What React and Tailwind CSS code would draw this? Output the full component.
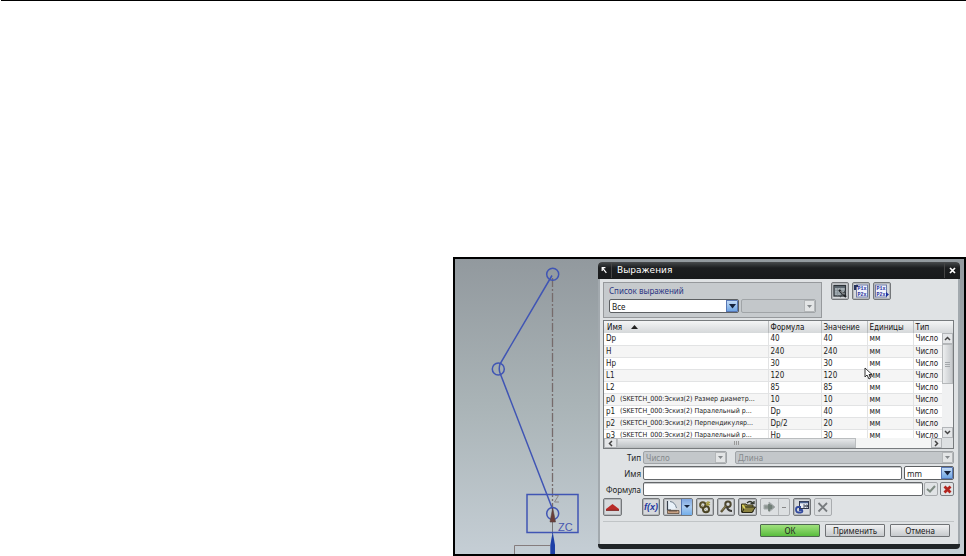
import React from "react";

const rows = [
  ["Dp", "40", "40"],
  ["H", "240", "240"],
  ["Hp", "30", "30"],
  ["L1", "120", "120"],
  ["L2", "85", "85"],
  ["p0", "10", "10", "(SKETCH_000:Эскиз(2) Размер диаметр..."],
  ["p1", "Dp", "40", "(SKETCH_000:Эскиз(2) Паралельный р..."],
  ["p2", "Dp/2", "20", "(SKETCH_000:Эскиз(2) Перпендикуляр..."],
  ["p3", "Hp", "30", "(SKETCH_000:Эскиз(2) Паралельный р..."],
];

function Sketch() {
  return (
    <svg className="h-[295px] w-[143px] shrink-0" viewBox="455 259 143 295" fill="none" aria-label="Эскиз">
      <path d="M552.5 278V508" stroke="#766b6b" strokeWidth="1.3" strokeDasharray="9 2 2 2" />
      <path d="M552.5 508V534" stroke="#777" />
      <g stroke="#4055b4" strokeWidth="1.5">
        <circle cx="552.7" cy="274.3" r="6" />
        <circle cx="498.3" cy="369" r="6" />
        <circle cx="552.7" cy="513.5" r="6" />
        <path d="M552 275.5L500 364Q498.5 369 500 373L552.5 509" />
        <rect x="527" y="494.5" width="51" height="38" />
      </g>
      <path d="M555 495.500H558.500L554.500 502H559" stroke="#8a8586" />
      <path d="M552.7 508L555.5 522H550Z" fill="#6b3d38" stroke="#54423f" strokeWidth=".6" />
      <text x="558" y="531" fill="#4858b0" className="font-['Liberation_Sans',sans-serif] text-[11px]">ZC</text>
      <path d="M552.700 532L555 545V554H550.300V545Z" fill="#1d3fa6" />
      <path d="M514.500 554V545.500H550" stroke="#857c7d" />
    </svg>
  );
}

function Arrow({ dim }) {
  return (
    <span
      className={
        dim
          ? "pointer-events-none flex w-[11px] shrink-0 items-center justify-center border border-[#b4b7b9] bg-[#e3e5e6]"
          : "pointer-events-none flex w-[12px] shrink-0 items-center justify-center border border-[#5877b4] bg-linear-to-b from-[#c3dbf5] to-[#6ea5e4]"
      }
    >
      <svg width="7" height="5" viewBox="0 0 7 5">
        <path d={dim ? "M1 1H6L3.500 4Z" : "M0 0H7L3.500 4.500Z"} fill={dim ? "#85898c" : "#15223c"} />
      </svg>
    </span>
  );
}

function Select({ id, label, value, dim, className }) {
  return (
    <span
      className={
        "flex overflow-hidden rounded-[2px] border " +
        (dim ? "border-[#a0a4a7] bg-[#c3c7ca] text-[#85898c] " : "border-[#5c5f62] bg-white text-[#222] ") +
        className
      }
    >
      <select
        id={id}
        aria-label={label}
        disabled={dim}
        className="min-w-0 flex-1 appearance-none bg-transparent pl-[2px] leading-[11px] opacity-100 outline-none"
      >
        <option>{value}</option>
      </select>
      <Arrow dim={dim} />
    </span>
  );
}

function Tool({ label, dim, children, className = "w-[18px]" }) {
  return (
    <button
      type="button"
      aria-label={label}
      className={
        "flex h-[18px] shrink-0 items-center justify-center rounded-[2px] border " +
        (dim ? "border-[#a9acaf] bg-[#dcdfe1] " : "border-[#74777a] bg-[#d6d9dc] shadow-[inset_0_0_0_1px_#b5b8bb] ") +
        className
      }
    >
      {children}
    </button>
  );
}

function Icon({ children, w = 14 }) {
  return (
    <svg width={w} height="14" viewBox={w === 14 ? "0 0 14 14" : "0 0 16 14"} fill="none" className="shrink-0">
      {children}
    </svg>
  );
}

function ParamsIcon({ out }) {
  return (
    <Icon>
      <rect x={out ? 0.5 : 2.5} y="1" width="11" height="12" fill="#f1f2fa" stroke="#6f7ba6" />
      <text x={out ? 1.5 : 3.5} y="6" fill="#1d2f9c" className="font-['Liberation_Mono',monospace] text-[5px] font-bold">P1x</text>
      <text x={out ? 1.5 : 3.5} y="12" fill="#1d2f9c" className="font-['Liberation_Mono',monospace] text-[5px] font-bold">P2x</text>
      {out ? <path d="M11 8L14 10.500L11 13Z" fill="#1d2f9c" /> : <path d="M0 1H4V3H2V6H0Z" fill="#26325c" />}
    </Icon>
  );
}

function TopTools() {
  return (
    <div className="ml-[9px] flex gap-[3px]">
      <Tool label="Таблица">
        <Icon>
          <rect x="1" y="1.500" width="11.500" height="10.500" fill="#a3adb2" stroke="#2c3237" strokeWidth="1.300" />
          <path d="M2 3H12" stroke="#46505a" strokeWidth="1.500" />
          <path d="M2 6.500H12M2 9H12M4.500 4V12M7.500 4V12" stroke="#7a858d" strokeWidth=".5" />
          <path d="M6 6L13 13" stroke="#1f2326" strokeWidth="2" />
          <path d="M12.500 7L7 13" stroke="#40464a" strokeWidth="1.300" />
          <path d="M7.500 7L11 10.500" stroke="#e5e5e5" strokeWidth=".8" />
        </Icon>
      </Tool>
      <Tool label="Импорт выражений"><ParamsIcon /></Tool>
      <Tool label="Экспорт выражений"><ParamsIcon out /></Tool>
    </div>
  );
}

function ScrollButton({ label, d, className }) {
  return (
    <button type="button" aria-label={label} className={"flex shrink-0 items-center justify-center border border-[#b2b5b8] bg-[#e4e6e8] " + className}>
      <svg width="7" height="7" viewBox="0 0 7 7" fill="none">
        <path d={d} stroke="#444" strokeWidth="1.500" />
      </svg>
    </button>
  );
}

function ExpressionTable() {
  return (
    <div className="mt-[2px] h-[129px] border border-[#777b7e] bg-white font-['DejaVu_Sans_Condensed','DejaVu_Sans',sans-serif]">
      <div className="flex h-[117px]">
        <div className="min-w-0 flex-1 overflow-hidden">
          <table className="w-full table-fixed border-collapse text-left leading-[11px]">
            <colgroup>
              <col />
              <col className="w-[53px]" />
              <col className="w-[46px]" />
              <col className="w-[46px]" />
              <col className="w-[29px]" />
            </colgroup>
            <thead>
              <tr className="h-[12px] bg-linear-to-b from-[#f4f5f6] to-[#d5d8da] text-[#111]">
                <th className="border-r border-[#b9bcbe] p-0 pl-[3px] font-normal">
                  <span className="flex items-center gap-[9px]">
                    Имя
                    <svg width="7" height="4" viewBox="0 0 7 4"><path d="M3.500 0L7 4H0Z" fill="#222" /></svg>
                  </span>
                </th>
                <th className="border-r border-[#b9bcbe] p-0 pl-[2px] font-normal">Формула</th>
                <th className="border-r border-[#b9bcbe] p-0 pl-[2px] font-normal">Значение</th>
                <th className="border-r border-[#b9bcbe] p-0 pl-[2px] font-normal">Единицы</th>
                <th className="p-0 pl-[2px] font-normal">Тип</th>
              </tr>
            </thead>
            <tbody>
              {rows.map(([name, formula, value, note]) => (
                <tr key={name} className="h-[12px] whitespace-nowrap border-b border-[#e2e3e4] text-[#222] even:bg-[#f5f5f5]">
                  <td className="border-r border-[#e2e3e4] p-0 pl-[2px]">
                    <span className="flex">
                      <span className={note ? "w-[14px] shrink-0" : ""}>{name}</span>
                      <span className="text-[7px]">{note}</span>
                    </span>
                  </td>
                  <td className="border-r border-[#e2e3e4] p-0 pl-[2px]">{formula}</td>
                  <td className="border-r border-[#e2e3e4] p-0 pl-[2px]">{value}</td>
                  <td className="border-r border-[#e2e3e4] p-0 pl-[2px]">мм</td>
                  <td className="p-0 pl-[2px]">Число</td>
                </tr>
              ))}
            </tbody>
          </table>
        </div>
        <div className="flex w-[11px] shrink-0 flex-col bg-[#f0f1f2]">
          <div className="h-[12px] bg-linear-to-b from-[#f4f5f6] to-[#d5d8da]" />
          <ScrollButton label="Вверх" className="h-[11px]" d="M1 5L3.500 2.500L6 5" />
          <div className="flex h-[40px] flex-col items-center justify-center gap-px border border-[#b5b8ba] bg-linear-to-r from-[#eceeef] to-[#c6c9cc]">
            <i className="h-px w-[5px] bg-[#a4a8ab]" />
            <i className="h-px w-[5px] bg-[#a4a8ab]" />
            <i className="h-px w-[5px] bg-[#a4a8ab]" />
          </div>
          <div className="flex-1" />
          <ScrollButton label="Вниз" className="h-[11px]" d="M1 2L3.500 4.500L6 2" />
        </div>
      </div>
      <div className="flex h-[10px] bg-[#f4f5f5]">
        <ScrollButton label="Влево" className="w-[13px]" d="M5 1L2.500 3.500L5 6" />
        <div className="flex w-[239px] items-center justify-center gap-px border border-[#babdbf] bg-linear-to-b from-[#e6e8ea] to-[#bfc3c6]">
          <i className="h-[4px] w-px bg-[#999]" />
          <i className="h-[4px] w-px bg-[#999]" />
          <i className="h-[4px] w-px bg-[#999]" />
        </div>
        <div className="flex-1" />
        <ScrollButton label="Вправо" className="w-[11px]" d="M2 1L4.500 3.500L2 6" />
        <div className="w-[11px] bg-[#dde0e2]" />
      </div>
    </div>
  );
}

function Fields() {
  const input = "h-[14px] min-w-0 flex-1 rounded-[2px] border border-[#64676a] bg-white px-[2px] shadow-[inset_0_1px_0_#c5c7c9] outline-none";
  const label = "w-[38px] shrink-0 text-right text-[#222]";
  return (
    <div className="mt-[2px] flex flex-col gap-[2px]">
      <div className="flex h-[13px] items-center">
        <label htmlFor="type" className={label}>Тип</label>
        <Select id="type" value="Число" dim className="ml-[2px] h-[13px] w-[84px]" />
        <Select label="Размерность" value="Длина" dim className="ml-[8px] h-[13px] flex-1" />
      </div>
      <div className="flex h-[14px] items-center">
        <label htmlFor="name" className={label}>Имя</label>
        <span className="w-[2px]" />
        <input id="name" className={input} />
        <Select label="Единицы" value="mm" className="ml-[2px] h-[14px] w-[50px]" />
      </div>
      <div className="flex h-[14px] items-center">
        <label htmlFor="formula" className={label}>Формула</label>
        <span className="w-[2px]" />
        <input id="formula" className={input} />
        <button type="button" aria-label="Принять" className="ml-px flex size-[14px] items-center justify-center rounded-[2px] border border-[#a6a9ac] bg-[#e0e3e5]">
          <svg width="10" height="8" viewBox="0 0 10 8" fill="none"><path d="M1 4L4 6.500L9 1" stroke="#7e8b82" strokeWidth="2" /></svg>
        </button>
        <button type="button" aria-label="Отклонить" className="ml-[2px] flex size-[14px] items-center justify-center rounded-[2px] border border-[#7b7e81] bg-[#e0e3e5]">
          <svg width="9" height="9" viewBox="0 0 9 9" fill="none"><path d="M1.500 1.500L7.500 7.500M7.500 1.500L1.500 7.500" stroke="#b3241d" strokeWidth="2.800" /></svg>
        </button>
      </div>
    </div>
  );
}

function ToolRow() {
  return (
    <div className="mt-[2px] flex">
      <Tool label="Свернуть" className="w-[19px]">
        <svg width="13" height="7" viewBox="0 0 13 7"><path d="M6.500 0L13 5V6.500H0V5Z" fill="#b92b28" /><path d="M0 6.300H13" stroke="#7c2624" /></svg>
      </Tool>
      <div className="ml-[20px] flex gap-[3px]">
        <Tool label="Функции">
          <span className="font-['Liberation_Sans',sans-serif] text-[9px] font-bold italic text-[#2438a0]">f(x)</span>
        </Tool>
        <Tool label="Измерить" className="w-[30px]">
          <Icon w={16}>
            <path d="M2 1H4L9 3L12 7L10 9H2Z" fill="#e9f2fa" />
            <path d="M5 1.500Q10 2 11.500 8" stroke="#6f7e8d" />
            <path d="M2.500 1V10H6" stroke="#38414d" strokeWidth="1.200" />
            <path d="M2.500 10.500H14V13.500H2.500Z" fill="#c8a284" stroke="#4e3e31" strokeWidth=".7" />
            <path d="M5 10V12M7 10V12M9 10V12M11 10V12" stroke="#493b30" strokeWidth=".7" />
          </Icon>
          <span className="flex h-[16px] w-[11px] items-center justify-center border-l border-[#5778b3] bg-linear-to-b from-[#7fa5df] via-[#a9cbf0] to-[#73aeea]">
            <svg width="6" height="4" viewBox="0 0 6 4"><path d="M0 0H6L3 3Z" fill="#15223c" /></svg>
          </span>
        </Tool>
        <Tool label="Связи">
          <Icon>
            <circle cx="4.800" cy="5" r="2.700" stroke="#574f2c" strokeWidth="1.900" />
            <circle cx="8" cy="9.300" r="3" stroke="#4a4425" strokeWidth="2" />
            <path d="M3 4L6 7M6 8L9 11" stroke="#afa36a" strokeWidth=".8" />
            <path d="M10 1V6M8 2.500L12 5M12 2L8 5" stroke="#a59a3c" strokeWidth="1.100" />
          </Icon>
        </Tool>
        <Tool label="Правка связей">
          <Icon>
            <circle cx="9" cy="4.300" r="2.700" stroke="#4d472f" strokeWidth="2" />
            <path d="M7 6L2 12" stroke="#5b5335" strokeWidth="2.400" />
            <path d="M8 7Q9 11 13 11" stroke="#3c3b36" strokeWidth="2.200" />
            <path d="M6.500 6L3 10.500" stroke="#b4a36a" strokeWidth=".6" />
          </Icon>
        </Tool>
        <Tool label="Открыть" className="w-[19px]">
          <Icon w={16}>
            <path d="M1.500 4H6L7 5H13V12H1.500Z" fill="#8e8541" stroke="#38351b" />
            <path d="M2 12.500L5 7H15.500L12 12.500Z" fill="#8b823f" stroke="#292819" />
            <path d="M7 3Q10 0 13 3M10.500 3.500H14V1" stroke="#34382e" strokeWidth="1.300" />
            <path d="M2.500 5L5 8.500" stroke="#e0d75e" strokeWidth="1.500" />
          </Icon>
        </Tool>
        <Tool label="Переместить" dim className="w-[30px]">
          <Icon w={16}>
            <path d="M2 5H7V2L13 7L7 12V9H2Z" fill="#8c9591" stroke="#a6abad" />
            <path d="M7 4V11M9 5V9" stroke="#697870" strokeWidth="1.500" />
          </Icon>
          <span className="flex h-[16px] w-[11px] items-center justify-center border-l border-[#b6b9bb]">
            <i className="h-px w-[4px] bg-[#888]" />
          </span>
        </Tool>
        <Tool label="Обновить">
          <Icon>
            <rect x="4.500" y="1.500" width="9" height="7" fill="#e9edf5" stroke="#30374c" />
            <path d="M5 2.500H13" stroke="#4d6491" strokeWidth="1.500" />
            <path d="M8 5H10V7H8M11 5V7H12.500V5Z" stroke="#343b47" strokeWidth=".8" />
            <path d="M6 7H3Q1 7 1 9.500T3 12.500H6Q8 12 7 10H4" stroke="#334b9f" strokeWidth="1.800" />
          </Icon>
        </Tool>
        <Tool label="Удалить" dim>
          <Icon><path d="M2.500 3L11 11.500M11 3L2.500 11.500" stroke="#777b7e" strokeWidth="1.800" /></Icon>
        </Tool>
      </div>
    </div>
  );
}

function Dialog() {
  return (
    <section className="relative mt-[3px] mr-[4px] mb-[5px] flex min-w-0 flex-1 flex-col overflow-hidden rounded-[4px] border-b-[5px] border-[#202427] bg-[#dfe2e4] font-['Noto_Sans',sans-serif] text-[8px] leading-[11px]">
      <header className="flex h-[17px] shrink-0 items-center bg-linear-to-b from-[#484b4d] via-[#1c1e20] via-35% to-[#181a1b] text-white">
        <svg width="14" height="15" viewBox="0 0 14 15" className="border-r border-[#444]">
          <path d="M5 5L9 10M4.500 8V4.500H8" stroke="#fff" strokeWidth="1.300" fill="none" />
        </svg>
        <h1 className="ml-[5px] flex-1 font-['DejaVu_Sans',sans-serif] text-[9px]">Выражения</h1>
        <button type="button" aria-label="Закрыть" className="flex h-[15px] w-[16px] items-center justify-center border-l border-[#444]">
          <svg width="7" height="7" viewBox="0 0 7 7"><path d="M1 1L6 6M6 1L1 6" stroke="#fff" strokeWidth="1.700" /></svg>
        </button>
      </header>
      <div className="flex-1 border-x-2 border-[#a2a9ae] pt-[3px] pr-[4px] pl-[3px]">
        <div className="flex">
          <fieldset className="h-[36px] w-[219px] border border-[#96999c] bg-[#c6cacd] px-[5px] pt-[2px]">
            <label htmlFor="filter" className="block h-[14px] text-[#2a3482]">Список выражений</label>
            <div className="flex gap-[2px]">
              <Select id="filter" value="Все" className="h-[14px] w-[130px]" />
              <Select label="Фильтр" value="" dim className="h-[14px] flex-1" />
            </div>
          </fieldset>
          <TopTools />
        </div>
        <ExpressionTable />
        <Fields />
        <ToolRow />
        <div className="mt-[5px] flex justify-end gap-[5px] border-t border-[#c0c4c6] pt-[2px] pr-[4px] text-[#222]">
          <button type="button" className="flex h-[13px] w-[60px] items-center justify-center rounded-[1px] border border-[#4f6950] bg-linear-to-b from-[#a0e17d] to-[#58bd3c]">ОК</button>
          <button type="button" className="flex h-[13px] w-[60px] items-center justify-center rounded-[1px] border border-[#6f7275] bg-linear-to-b from-[#f0f1f2] to-[#c7cacd]">Применить</button>
          <button type="button" className="flex h-[13px] w-[60px] items-center justify-center rounded-[1px] border border-[#6f7275] bg-linear-to-b from-[#f0f1f2] to-[#c7cacd]">Отмена</button>
        </div>
      </div>
      <svg className="pointer-events-none absolute top-[105px] right-[87px]" width="9" height="13" viewBox="0 0 9 13">
        <path d="M1 1V10L3 8L5 12L6.500 11L5 7.500H8Z" fill="#fff" stroke="#333" />
      </svg>
    </section>
  );
}

export default function App() {
  return (
    <main className="bg-white">
      <div className="ml-px border-t border-black" />
      <figure className="mt-[256px] ml-auto flex w-[513px] max-w-full border-2 border-black bg-linear-to-b from-[#92999e] via-[#aab4b7] to-[#c5ced5]">
        <Sketch />
        <Dialog />
      </figure>
    </main>
  );
}
